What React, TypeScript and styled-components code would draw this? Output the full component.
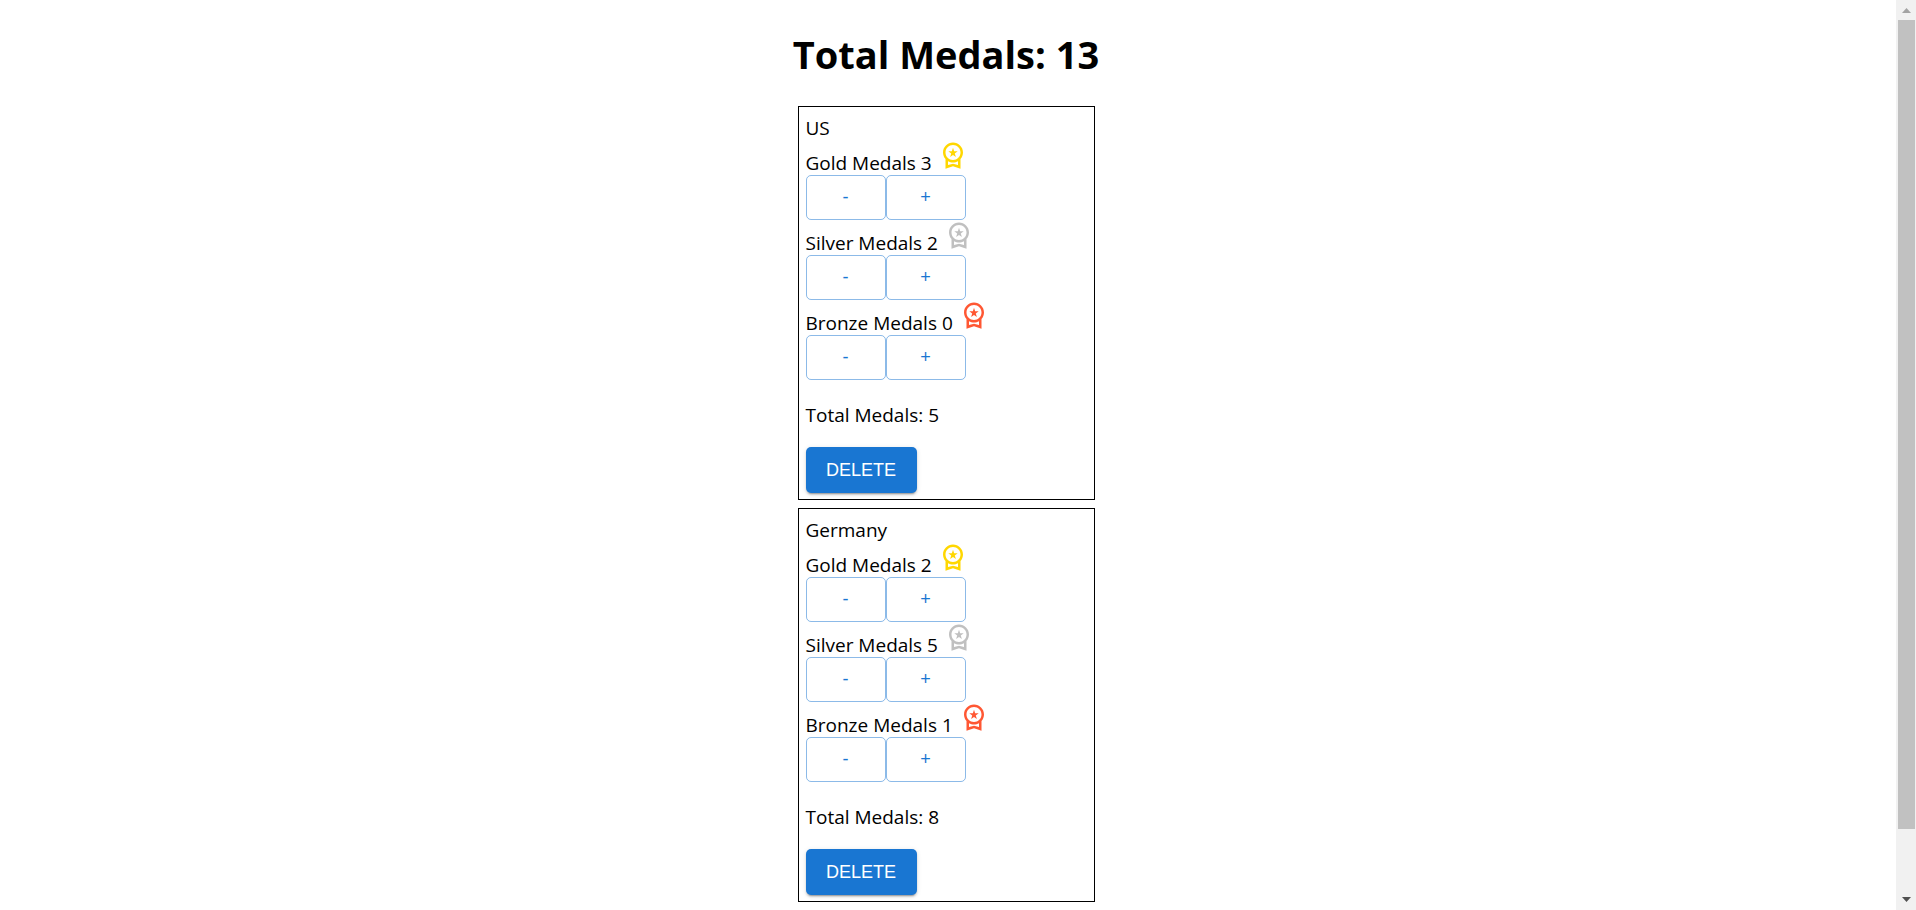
import React, { useState } from "react";
import styled, { createGlobalStyle } from "styled-components";

const GlobalStyle = createGlobalStyle`
  * { box-sizing: border-box; }
  body {
    margin: 0;
    background: #fff;
    color: #000;
    font-family: "Segoe UI", "Open Sans", "Noto Sans", sans-serif;
    font-size: 19px;
  }
`;

const Page = styled.div`
  display: grid;
  grid-template-columns: minmax(0, 1fr) 20px;
  min-height: 100vh;
`;

const Main = styled.main`
  display: flex;
  flex-direction: column;
  align-items: center;
  padding: 28px 4px 8px 0;
`;

const Title = styled.h1`
  margin: 0 0 26px;
  font-size: 38px;
  line-height: 52px;
  font-weight: 700;
`;

const CardList = styled.div`
  display: flex;
  flex-direction: column;
  gap: 8px;
  width: 297px;
`;

const Card = styled.section`
  border: 1px solid #000;
  padding: 9px 7px 6px;
`;

const Country = styled.div`
  line-height: 24px;
`;

const MedalLabel = styled.div`
  display: flex;
  align-items: flex-start;
  gap: 6px;
  height: 35px;
`;

const MedalText = styled.span`
  padding-top: 10px;
  line-height: 26px;
`;

const MedalSvg = styled.svg<{ $color: string }>`
  width: 30px;
  height: 30px;
  fill: ${(p) => p.$color};
`;

const ButtonRow = styled.div`
  display: flex;
`;

const Button = styled.button`
  border-radius: 5px;
  font-family: "Liberation Sans", Arial, sans-serif;
  font-size: 18px;
  font-weight: 500;
  cursor: pointer;
`;

const CountButton = styled(Button)`
  width: 80px;
  height: 45px;
  padding: 0;
  border: 1px solid rgba(25, 118, 210, 0.5);
  background: transparent;
  color: #1976d2;
`;

const CardTotal = styled.div`
  margin: 22px 0 18px;
  line-height: 27px;
`;

const DeleteButton = styled(Button)`
  display: block;
  min-width: 111px;
  height: 46px;
  padding: 0 20px;
  border: 0;
  background: #1976d2;
  color: #fff;
  text-transform: uppercase;
  box-shadow: 0 3px 1px -2px rgba(0, 0, 0, 0.2), 0 2px 2px 0 rgba(0, 0, 0, 0.14),
    0 1px 5px 0 rgba(0, 0, 0, 0.12);
`;

const ScrollTrack = styled.div`
  position: sticky;
  top: 0;
  display: flex;
  flex-direction: column;
  align-items: center;
  height: 100vh;
  background: #f1f1f1;
`;

const ScrollArrow = styled.svg`
  flex: none;
  width: 20px;
  height: 20px;
`;

const ScrollRail = styled.div`
  flex: 1;
  width: 17px;
`;

const ScrollThumb = styled.div`
  height: 93%;
  background: #c1c1c1;
`;

type Kind = "gold" | "silver" | "bronze";

const KINDS: { kind: Kind; name: string; color: string }[] = [
  { kind: "gold", name: "Gold", color: "#ffd700" },
  { kind: "silver", name: "Silver", color: "#c0c0c0" },
  { kind: "bronze", name: "Bronze", color: "#ff5733" },
];

type CountryData = { name: string } & Record<Kind, number>;

const INITIAL: CountryData[] = [
  { name: "US", gold: 3, silver: 2, bronze: 0 },
  { name: "Germany", gold: 2, silver: 5, bronze: 1 },
];

const sum = (c: CountryData) => c.gold + c.silver + c.bronze;

function MedalIcon({ color }: { color: string }) {
  return (
    <MedalSvg $color={color} viewBox="0 0 24 24" aria-hidden="true">
      <path d="M9.68 13.69 12 11.93l2.31 1.76-.88-2.85L15.75 9h-2.84L12 6.19 11.09 9H8.25l2.31 1.84-.88 2.85zM20 10c0-4.42-3.58-8-8-8s-8 3.58-8 8c0 2.03.76 3.87 2 5.28V23l6-2 6 2v-7.72c1.24-1.41 2-3.25 2-5.28zm-8-6c3.31 0 6 2.69 6 6s-2.69 6-6 6-6-2.69-6-6 2.69-6 6-6zm0 15-4 1.02v-3.1c1.18.68 2.54 1.08 4 1.08s2.82-.4 4-1.08v3.1L12 19z" />
    </MedalSvg>
  );
}

export default function App() {
  const [countries, setCountries] = useState(INITIAL);

  const change = (name: string, kind: Kind, by: number) =>
    setCountries((list) =>
      list.map((c) => (c.name === name ? { ...c, [kind]: Math.max(0, c[kind] + by) } : c))
    );

  const remove = (name: string) => setCountries((list) => list.filter((c) => c.name !== name));

  return (
    <>
      <GlobalStyle />
      <Page>
        <Main>
          <Title>Total Medals: {countries.reduce((n, c) => n + sum(c), 0)}</Title>
          <CardList>
            {countries.map((c) => (
              <Card key={c.name}>
                <Country>{c.name}</Country>
                {KINDS.map(({ kind, name, color }) => (
                  <div key={kind}>
                    <MedalLabel>
                      <MedalText>
                        {name} Medals {c[kind]}
                      </MedalText>
                      <MedalIcon color={color} />
                    </MedalLabel>
                    <ButtonRow>
                      <CountButton onClick={() => change(c.name, kind, -1)}>-</CountButton>
                      <CountButton onClick={() => change(c.name, kind, 1)}>+</CountButton>
                    </ButtonRow>
                  </div>
                ))}
                <CardTotal>Total Medals: {sum(c)}</CardTotal>
                <DeleteButton onClick={() => remove(c.name)}>Delete</DeleteButton>
              </Card>
            ))}
          </CardList>
        </Main>
        <ScrollTrack aria-hidden="true">
          <ScrollArrow viewBox="0 0 20 20">
            <path d="M6 13h9l-4.500-5z" fill="#a3a3a3" />
          </ScrollArrow>
          <ScrollRail>
            <ScrollThumb />
          </ScrollRail>
          <ScrollArrow viewBox="0 0 20 20">
            <path d="M6 7h9l-4.500 5z" fill="#505050" />
          </ScrollArrow>
        </ScrollTrack>
      </Page>
    </>
  );
}
